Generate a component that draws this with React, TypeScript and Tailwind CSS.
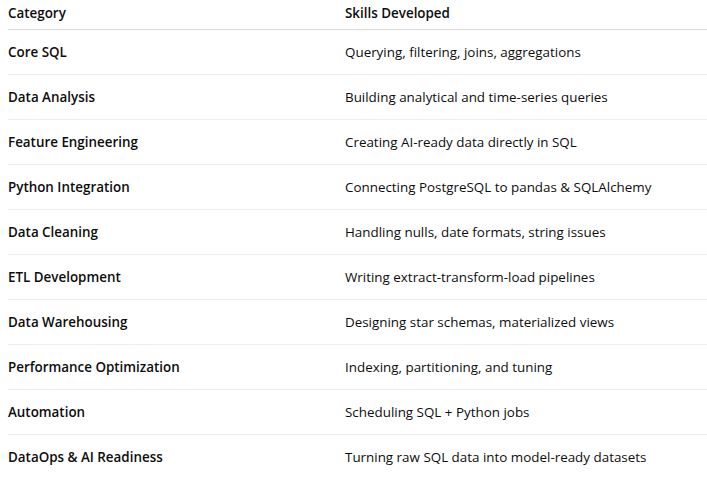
import React from 'react';

const rows: [string, string][] = [
  ['Core SQL', 'Querying, filtering, joins, aggregations'],
  ['Data Analysis', 'Building analytical and time-series queries'],
  ['Feature Engineering', 'Creating AI-ready data directly in SQL'],
  ['Python Integration', 'Connecting PostgreSQL to pandas & SQLAlchemy'],
  ['Data Cleaning', 'Handling nulls, date formats, string issues'],
  ['ETL Development', 'Writing extract-transform-load pipelines'],
  ['Data Warehousing', 'Designing star schemas, materialized views'],
  ['Performance Optimization', 'Indexing, partitioning, and tuning'],
  ['Automation', 'Scheduling SQL + Python jobs'],
  ['DataOps & AI Readiness', 'Turning raw SQL data into model-ready datasets'],
];

export default function App() {
  return (
    <div className="bg-white min-h-screen pl-2 text-[13.4px] text-[#0d0d0d] font-['Open_Sans',sans-serif]">
      <div className="grid grid-cols-[337px_1fr] h-[30px] items-start pt-[3px] border-b border-[#d9d9d9] font-semibold">
        <div>Category</div>
        <div>Skills Developed</div>
      </div>
      {rows.map(([cat, skills], i) => (
        <div
          key={cat}
          className={
            'grid grid-cols-[337px_1fr] h-[45px] items-center ' +
            (i < rows.length - 1 ? 'border-b border-[#ececec]' : '')
          }
        >
          <div className="font-semibold">{cat}</div>
          <div>{skills}</div>
        </div>
      ))}
    </div>
  );
}
